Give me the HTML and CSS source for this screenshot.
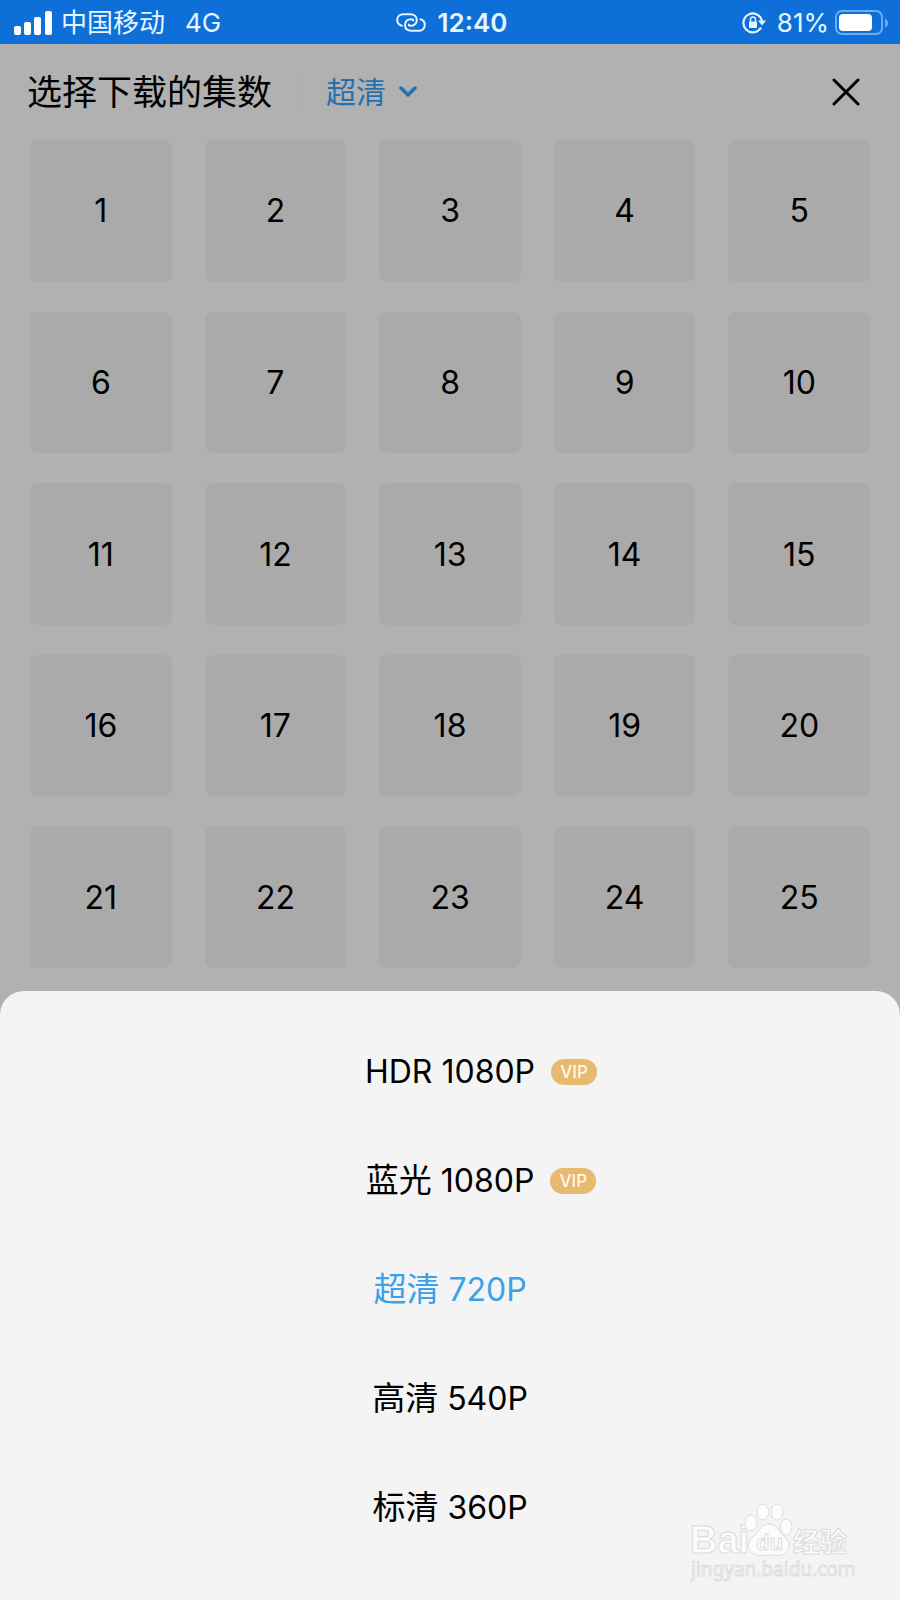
FILE: index.html
```html
<!DOCTYPE html>
<html lang="zh-CN">
<head>
<meta charset="utf-8">
<meta name="viewport" content="width=device-width, initial-scale=1">
<title>选择下载的集数</title>
<link rel="stylesheet" href="styles.css">
</head>
<body>
<div class="status">
  <div class="status-left">
    <svg width="38" height="24" viewBox="0 0 38 24" fill="#fff" aria-hidden="true"><rect x="0" y="15" width="7" height="9" rx="2"/><rect x="10" y="11" width="7" height="13" rx="2"/><rect x="20" y="6" width="7" height="18" rx="2"/><rect x="31" y="0" width="7" height="24" rx="2"/></svg>
    <span class="carrier">中国移动</span>
    <span>4G</span>
  </div>
  <div class="status-mid">
    <svg width="30" height="20" viewBox="0 0 30 20" fill="none" stroke="#e4f6ff" stroke-width="2" stroke-linecap="round" aria-hidden="true"><path d="M6 12.700C3 12 1.200 10 1.200 7C1.200 3.500 4 1.200 7.500 1.200H14C18 1.200 20.800 3.500 20.800 7C20.800 10.500 18 12.800 15 12.800C13.500 12.800 12.800 12.300 12.800 11.500"/><path d="M24.500 6.200C27.300 7 28.800 9 28.800 11.700C28.800 15.500 26 17.800 22.500 17.800H15.500C11.500 17.800 9 15.500 9 12C9 8.500 11.500 6.200 15 6.200C16.500 6.200 17.200 6.700 17.200 7.500"/></svg>
    <span class="clock">12:40</span>
  </div>
  <div class="status-right">
    <svg width="24" height="22" viewBox="0 0 24 22" aria-hidden="true"><path d="M19 15.500A9.400 9.400 0 1 1 20 9" fill="none" stroke="#e4f6ff" stroke-width="2.200"/><path d="M16 8.500H24L20 13.500Z" fill="#e4f6ff"/><rect x="7" y="9.500" width="8" height="6.500" rx="1" fill="#e4f6ff"/><path d="M8.500 10V7.500a2.500 2.500 0 0 1 5 0V10" fill="none" stroke="#e4f6ff" stroke-width="1.400"/></svg>
    <span class="percent">81%</span>
    <svg width="54" height="26" viewBox="0 0 54 26" aria-hidden="true"><rect x="1" y="1" width="46" height="23" rx="6" fill="none" stroke="#6eacf0" stroke-width="2"/><rect x="4" y="4" width="33" height="17" rx="4" fill="#fff"/><path d="M50 8.500q3 1.500 3 4.500t-3 4.500z" fill="#6eacf0"/></svg>
  </div>
</div>
<header class="header">
  <h1 class="title">选择下载的集数</h1>
  <button class="quality" type="button">超清
    <svg width="18" height="12" viewBox="0 0 18 12" fill="none" stroke="#2671ad" stroke-width="3.500" stroke-linecap="round" stroke-linejoin="round" aria-hidden="true"><path d="M2 2L9 9L16 2"/></svg>
  </button>
  <button class="close" type="button" aria-label="关闭">
    <svg width="28" height="28" viewBox="0 0 28 28" fill="none" stroke="#000" stroke-width="3" stroke-linecap="round" aria-hidden="true"><path d="M2 2L26 26M26 2L2 26"/></svg>
  </button>
</header>
<main class="episodes">
  <button class="episode" type="button">1</button>
  <button class="episode" type="button">2</button>
  <button class="episode" type="button">3</button>
  <button class="episode" type="button">4</button>
  <button class="episode" type="button">5</button>
  <button class="episode" type="button">6</button>
  <button class="episode" type="button">7</button>
  <button class="episode" type="button">8</button>
  <button class="episode" type="button">9</button>
  <button class="episode" type="button">10</button>
  <button class="episode" type="button">11</button>
  <button class="episode" type="button">12</button>
  <button class="episode" type="button">13</button>
  <button class="episode" type="button">14</button>
  <button class="episode" type="button">15</button>
  <button class="episode" type="button">16</button>
  <button class="episode" type="button">17</button>
  <button class="episode" type="button">18</button>
  <button class="episode" type="button">19</button>
  <button class="episode" type="button">20</button>
  <button class="episode" type="button">21</button>
  <button class="episode" type="button">22</button>
  <button class="episode" type="button">23</button>
  <button class="episode" type="button">24</button>
  <button class="episode" type="button">25</button>
</main>
<section class="sheet" aria-label="清晰度">
  <button class="option" type="button"><span class="label">HDR 1080P<span class="vip">VIP</span></span></button>
  <button class="option" type="button"><span class="label"><span class="hanzi">蓝光</span> 1080P<span class="vip">VIP</span></span></button>
  <button class="option option-active" type="button"><span class="hanzi">超清</span> 720P</button>
  <button class="option" type="button"><span class="hanzi">高清</span> 540P</button>
  <button class="option" type="button"><span class="hanzi">标清</span> 360P</button>
  <svg class="watermark" width="170" height="84" viewBox="0 0 170 84" fill="#fcfcfc" stroke="#dcdcdc" stroke-width="1">
    <text class="mark-latin" x="0" y="51">Bai</text>
    <ellipse cx="61" cy="21" rx="6" ry="8"/><ellipse cx="73" cy="10" rx="6" ry="8"/><ellipse cx="87" cy="10" rx="6" ry="8"/><ellipse cx="96" cy="25" rx="6" ry="8"/>
    <path d="M79 22C71 22 70 29 64 34C58 39 57 45 60 49C64 55 72 53 79 53C86 53 93 55 97 49C101 44 99 38 94 34C88 29 87 22 79 22Z"/>
    <text class="mark-du" x="66" y="48">du</text>
    <text class="mark-cjk" x="103" y="50">经验</text>
    <text class="mark-url" x="1" y="74">jingyan.baidu.com</text>
  </svg>
</section>
</body>
</html>
```
FILE: styles.css
```css
* {
  box-sizing: border-box;
}

body {
  margin: 0;
  min-height: 100vh;
  display: flex;
  flex-direction: column;
  background: #b1b1b1;
  color: #000;
  font-family: Inter, "Noto Sans CJK SC", sans-serif;
}

button {
  border: 0;
  padding: 0;
  background: none;
  color: inherit;
  font: inherit;
  cursor: pointer;
}

svg {
  display: block;
}

.status {
  display: grid;
  grid-template-columns: 1fr auto 1fr;
  align-items: center;
  height: 44px;
  padding: 2px 11px 0 14px;
  background: #0f6fd9;
  color: #e4f6ff;
  font-size: 26px;
  line-height: 42px;
}

.status-left,
.status-mid,
.status-right {
  display: flex;
  align-items: center;
}

.status-left {
  gap: 20px;
}

.carrier {
  margin-left: -11px;
}

.status-mid {
  gap: 12px;
}

.clock {
  font-weight: 600;
}

.status-right {
  justify-content: flex-end;
  gap: 6px;
}

.percent {
  margin-left: 5px;
}

.header {
  display: flex;
  align-items: center;
  height: 96px;
  padding: 0 40px 0 27px;
}

.title {
  margin: 0;
  padding-right: 28px;
  border-right: 1px solid #adadad;
  font-size: 35px;
  font-weight: 400;
  line-height: 40px;
}

.quality {
  display: flex;
  align-items: center;
  gap: 13px;
  margin-left: 25px;
  color: #2671ad;
  font-size: 30px;
  line-height: 40px;
}

.close {
  margin-left: auto;
}

.episodes {
  display: grid;
  grid-template-columns: repeat(5, 1fr);
  gap: 30px 33px;
  padding: 0 30px 23px;
}

.episode {
  aspect-ratio: 1;
  border-radius: 8px;
  background: #aaa;
  font-size: 32px;
}

.sheet {
  position: relative;
  flex: 1;
  display: flex;
  flex-direction: column;
  padding: 26px 0 38px;
  border-radius: 24px 24px 0 0;
  background: #f4f4f4;
}

.option {
  height: 109px;
  font-size: 32px;
  line-height: 109px;
}

.option-active {
  color: #3aa2e8;
}

.hanzi {
  font-size: 33px;
}

.label {
  position: relative;
}

.vip {
  position: absolute;
  left: 100%;
  top: 50%;
  width: 46px;
  height: 26px;
  margin: -13px 0 0 16px;
  border-radius: 13px;
  background: #e8b970;
  color: #fff8e6;
  font-size: 17px;
  font-weight: 500;
  line-height: 26px;
}

.watermark {
  position: absolute;
  right: 40px;
  bottom: 14px;
}

.mark-latin {
  font: 700 38px "Liberation Sans", sans-serif;
}

.mark-du {
  font: 700 22px "Liberation Sans", sans-serif;
}

.mark-cjk {
  font: 700 27px "Noto Sans CJK SC", sans-serif;
}

.mark-url {
  font: 400 19px "Noto Sans", sans-serif;
}
```
